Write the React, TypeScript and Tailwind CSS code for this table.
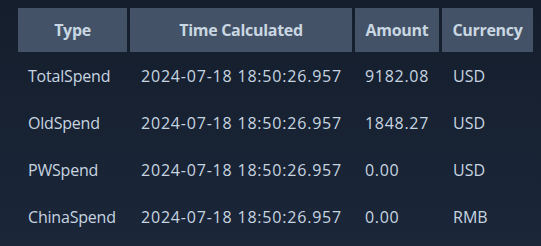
const rows = [
  { type: "TotalSpend", time: "2024-07-18 18:50:26.957", amount: "9182.08", currency: "USD" },
  { type: "OldSpend", time: "2024-07-18 18:50:26.957", amount: "1848.27", currency: "USD" },
  { type: "PWSpend", time: "2024-07-18 18:50:26.957", amount: "0.00", currency: "USD" },
  { type: "ChinaSpend", time: "2024-07-18 18:50:26.957", amount: "0.00", currency: "RMB" },
];

const headers = ["Type", "Time Calculated", "Amount", "Currency"];

export default function App() {
  return (
    <div className="w-[541px] h-[246px] bg-gradient-to-b from-[#141e2c] to-[#1b2639] pt-2 pl-[18px] text-[#c7d5e0] font-['Open_Sans',sans-serif]">
      <div className="grid grid-cols-[109px_222px_84px_91px] gap-x-[3px]">
        {headers.map((h) => (
          <div
            key={h}
            className="h-[44px] bg-[#435266] flex items-center justify-center text-[16px] font-bold tracking-[-0.3px] text-[#c9d7e2]"
          >
            {h}
          </div>
        ))}
        {rows.map((r) => (
          <div key={r.type} className="contents">
            <div className="h-[47px] flex items-center pl-[10px] text-[16px] tracking-[-0.2px]">{r.type}</div>
            <div className="h-[47px] flex items-center pl-[11px] text-[16px] tracking-[0.8px]">{r.time}</div>
            <div className="h-[47px] flex items-center pl-[10px] text-[16px] tracking-[0.7px]">{r.amount}</div>
            <div className="h-[47px] flex items-center pl-[11px] text-[16px]">{r.currency}</div>
          </div>
        ))}
      </div>
    </div>
  );
}
